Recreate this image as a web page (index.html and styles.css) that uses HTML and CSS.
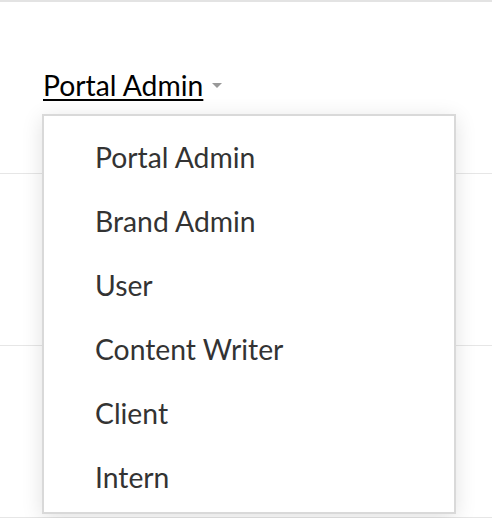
FILE: index.html
```html
<!DOCTYPE html>
<html>
<head>
<meta charset="utf-8">
<link rel="stylesheet" href="styles.css">
</head>
<body>
<div class="table">
  <div class="row first">
    <div class="dropdown">
      <a class="trigger" href="#">Portal Admin</a><span class="caret"></span>
      <ul class="menu">
        <li>Portal Admin</li>
        <li>Brand Admin</li>
        <li>User</li>
        <li>Content Writer</li>
        <li>Client</li>
        <li>Intern</li>
      </ul>
    </div>
  </div>
  <div class="row"></div>
  <div class="row"></div>
</div>
</body>
</html>
```
FILE: styles.css
```css
html, body {
  margin: 0;
  padding: 0;
  background: #fff;
  font-family: Lato, "Open Sans", sans-serif;
}
.table {
  border-top: 2px solid #e3e3e3;
}
.row {
  height: 171px;
  border-bottom: 1px solid #e6e6e6;
  box-sizing: content-box;
}
.row.first {
  padding-left: 43px;
  padding-top: 66px;
  height: 105px;
}
.dropdown {
  position: relative;
  display: inline-flex;
  align-items: center;
}
.trigger {
  color: #000;
  font-size: 28.3px;
  line-height: 34px;
  text-decoration: underline;
  text-underline-offset: 3px;
  text-decoration-thickness: 2px;
}
.caret {
  margin-left: 9px;
  width: 0;
  height: 0;
  border-left: 5px solid transparent;
  border-right: 5px solid transparent;
  border-top: 5px solid #999;
}
.menu {
  position: absolute;
  left: -1px;
  top: 46px;
  width: 410px;
  margin: 0;
  padding: 9px 0 3px;
  list-style: none;
  background: #fff;
  border: 2px solid #d9d9d9;
  box-shadow: 0 4px 20px rgba(0,0,0,0.12);
}
.menu li {
  height: 64px;
  line-height: 64px;
  padding-left: 51px;
  font-size: 28.3px;
  color: #333;
}
```
